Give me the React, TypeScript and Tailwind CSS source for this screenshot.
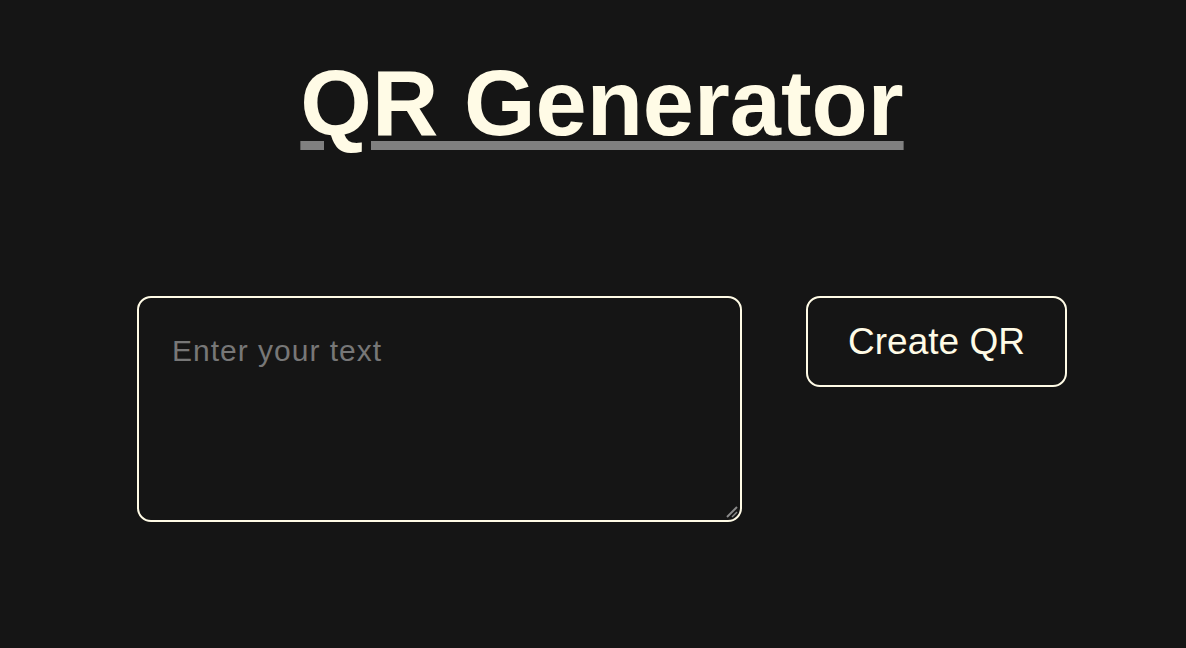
import React, { useState } from 'react';

const App: React.FC = () => {
  const [text, setText] = useState('');

  return (
    <div className="min-h-screen w-full bg-[#151515] text-[#fffbe6] font-['Liberation_Sans',Arial,sans-serif]">
      <div className="flex flex-col items-center pt-[48px] pl-[18px]">
        {/* Title */}
        <h1 className="text-[92px] font-bold leading-[110px] underline decoration-[#808080] decoration-[9px] underline-offset-[6px]">
          QR Generator
        </h1>

        {/* Input row */}
        <div className="mt-[138px] flex items-start gap-[64px]">
          <div className="relative">
            <textarea
              value={text}
              onChange={(e) => setText(e.target.value)}
              placeholder="Enter your text"
              className="block h-[226px] w-[605px] resize-none rounded-[14px] border-2 border-[#fffbe6] bg-[#151515] px-[33px] pt-[35px] text-[30px] leading-[36px] tracking-[1px] text-[#fffbe6] outline-none placeholder:text-[#777777]"
            />
            {/* resize grip */}
            <svg
              className="pointer-events-none absolute bottom-[4px] right-[4px]"
              width="12"
              height="12"
              viewBox="0 0 12 12"
            >
              <line x1="1" y1="11" x2="11" y2="1" stroke="#8a8a8a" strokeWidth="2" />
              <line x1="6" y1="11" x2="11" y2="6" stroke="#8a8a8a" strokeWidth="1.5" />
            </svg>
          </div>
          <button className="h-[91px] w-[261px] rounded-[14px] border-2 border-[#fffbe6] bg-[#151515] text-[37px] text-[#fffbe6]">
            Create QR
          </button>
        </div>
      </div>
    </div>
  );
};

export default App;
